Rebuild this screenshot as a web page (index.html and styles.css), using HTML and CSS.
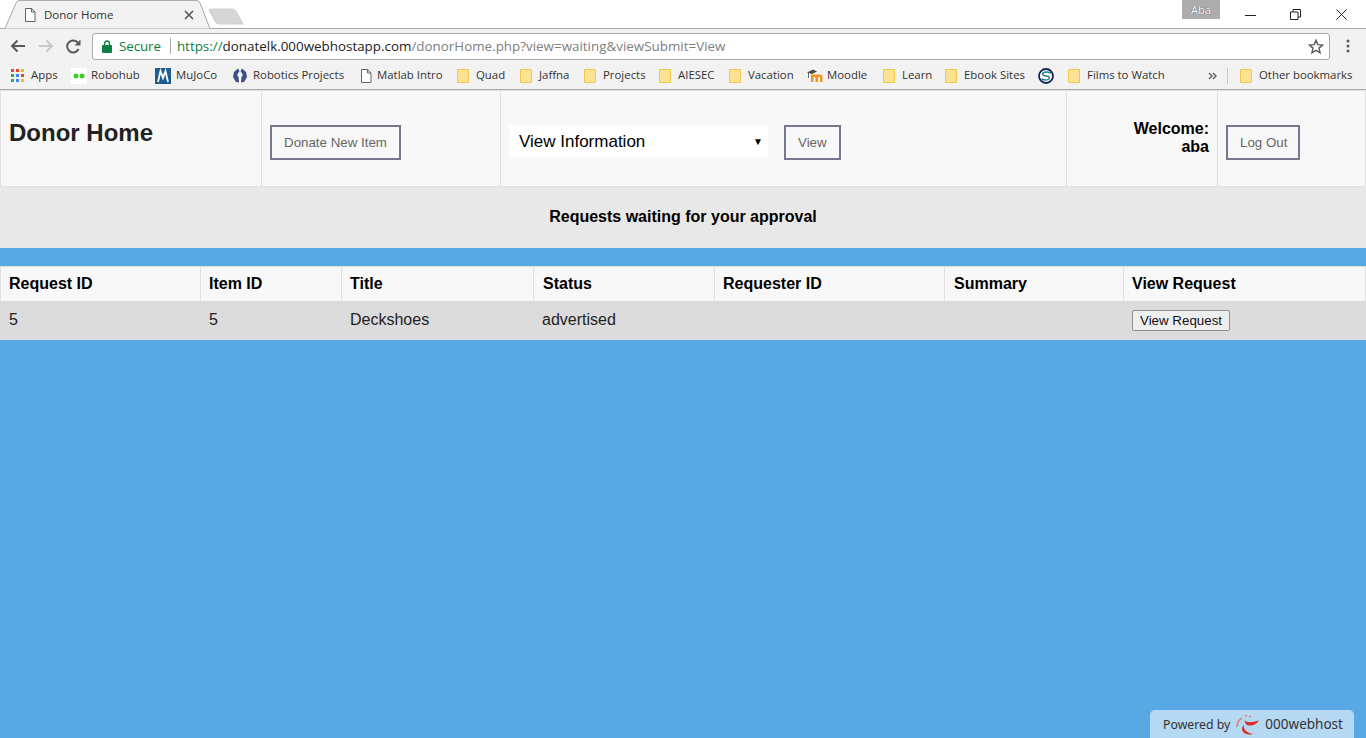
FILE: index.html
```html
<!DOCTYPE html>
<html lang="en">
<head>
  <meta charset="UTF-8">
  <title>Donor Home</title>
  <link rel="stylesheet" href="styles.css">
</head>
<body>
  <div class="tabstrip">
    <svg class="tab-shape" width="250" height="29" viewBox="0 0 250 29">
      <path d="M0 28.5H5L16 3Q17 .5 20 .5H196Q199 .5 200 3L210 28.5" fill="#f2f2f2" stroke="#a9a9a9"/>
      <path d="M210 9H232Q235 9 236 11L243 24H219Q216 24 215 21L209 10Q209 9 210 9Z" fill="#d6d6d6" stroke="#d0d0d0"/>
    </svg>
    <div class="tab">
      <svg width="12" height="14" viewBox="0 0 12 14"><path d="M1.5.5H7.5L11 4V13.5H1.5ZM7.5.5V4H11" fill="#fff" stroke="#5f6368"/></svg>
      <span class="tab-title">Donor Home</span>
      <svg class="tab-close" width="10" height="10" viewBox="0 0 10 10"><path d="M1 1L9 9M9 1L1 9" stroke="#555" stroke-width="1.6"/></svg>
    </div>
    <div class="win-controls">
      <span class="profile">Aba</span>
      <span class="win-btn"><svg width="11" height="11" viewBox="0 0 11 11"><path d="M0 6.5H11" stroke="#222"/></svg></span>
      <span class="win-btn"><svg width="11" height="11" viewBox="0 0 11 11"><path d="M.5 3H8V10.5H.5ZM3 3V.5H10.5V8H8" fill="none" stroke="#222"/></svg></span>
      <span class="win-btn"><svg width="11" height="11" viewBox="0 0 11 11"><path d="M.5 .5L10.5 10.5M10.5 .5L.5 10.5" stroke="#222"/></svg></span>
    </div>
  </div>

  <div class="toolbar">
    <svg class="nav" width="16" height="14" viewBox="0 0 16 14"><path d="M15 7H2M7.5 1.5L2 7L7.5 12.5" fill="none" stroke="#5a5a5a" stroke-width="2"/></svg>
    <svg class="nav" width="16" height="14" viewBox="0 0 16 14"><path d="M1 7H14M8.5 1.5L14 7L8.5 12.5" fill="none" stroke="#c8c8c8" stroke-width="2"/></svg>
    <svg class="nav" width="15" height="15" viewBox="0 0 15 15"><path d="M12.6 10A6 6 0 1 1 12 3.8" fill="none" stroke="#5a5a5a" stroke-width="2"/><path d="M14.5 .5V6.5H8.5Z" fill="#5a5a5a"/></svg>
    <div class="omnibox">
      <svg width="10" height="13" viewBox="0 0 10 13"><path d="M2.5 6V3.5A2.5 2.5 0 0 1 7.5 3.5V6" fill="none" stroke="#0b8043" stroke-width="1.4"/><rect y="5" width="10" height="8" rx="1" fill="#0b8043"/></svg>
      <span class="secure">Secure</span>
      <span class="omni-sep"></span>
      <span class="url"><span class="url-scheme">https://</span><span class="url-host">donatelk.000webhostapp.com</span>/donorHome.php?view=waiting&amp;viewSubmit=View</span>
      <svg class="star" width="16" height="15" viewBox="0 0 16 15"><path d="M8 1.2L9.8 5.6L14.6 6L11 9.1L12.1 13.8L8 11.3L3.9 13.8L5 9.1L1.4 6L6.2 5.6Z" fill="none" stroke="#5a5a5a" stroke-width="1.4"/></svg>
    </div>
    <svg class="menu" width="4" height="14" viewBox="0 0 4 14"><circle cx="2" cy="2" r="1.5" fill="#5a5a5a"/><circle cx="2" cy="7" r="1.5" fill="#5a5a5a"/><circle cx="2" cy="12" r="1.5" fill="#5a5a5a"/></svg>
  </div>

  <div class="bookmarks">
    <div class="bm">
      <svg width="13" height="13" viewBox="0 0 13 13">
        <rect width="3" height="3" fill="#ea4335"/><rect x="5" width="3" height="3" fill="#ea4335"/><rect x="10" width="3" height="3" fill="#fbbc05"/>
        <rect y="5" width="3" height="3" fill="#34a853"/><rect x="5" y="5" width="3" height="3" fill="#4285f4"/><rect x="10" y="5" width="3" height="3" fill="#ea4335"/>
        <rect y="10" width="3" height="3" fill="#34a853"/><rect x="5" y="10" width="3" height="3" fill="#4285f4"/><rect x="10" y="10" width="3" height="3" fill="#fbbc05"/>
      </svg>
      <span>Apps</span>
    </div>
    <div class="bm bm-tight">
      <svg width="16" height="16" viewBox="0 0 16 16"><rect width="16" height="16" fill="#fff"/><circle cx="5" cy="8" r="2.5" fill="#3fce29"/><circle cx="11" cy="8" r="2.5" fill="#3fce29"/></svg>
      <span>Robohub</span>
    </div>
    <div class="bm bm-doc">
      <svg width="16" height="16" viewBox="0 0 16 16"><rect width="16" height="16" fill="#1b5e8f"/><path d="M3 14L5.5 3L8 10L10.5 3L13 14" fill="none" stroke="#fff" stroke-width="1.8"/></svg>
      <span>MuJoCo</span>
    </div>
    <div class="bm bm-six">
      <svg width="14" height="15" viewBox="0 0 14 15"><path d="M5 .5L1 4L0 9L3 14L6 14.5L5.5 9L4 7L6.5 3ZM9 .5L13 4L14 9L11 14L8 14.5L8.5 9L10 7L7.5 3Z" fill="#3f4f86"/></svg>
      <span>Robotics Projects</span>
    </div>
    <div class="bm bm-doc">
      <svg width="12" height="14" viewBox="0 0 12 14"><path d="M1.5 .5H7.5L11 4V13.5H1.5ZM7.5 .5V4H11" fill="#fff" stroke="#5f6368"/></svg>
      <span>Matlab Intro</span>
    </div>
    <div class="bm"><svg class="folder" width="12" height="14" viewBox="0 0 12 14"><use href="#folder"/></svg><span>Quad</span></div>
    <div class="bm"><svg class="folder" width="12" height="14" viewBox="0 0 12 14"><use href="#folder"/></svg><span>Jaffna</span></div>
    <div class="bm"><svg class="folder" width="12" height="14" viewBox="0 0 12 14"><use href="#folder"/></svg><span>Projects</span></div>
    <div class="bm"><svg class="folder" width="12" height="14" viewBox="0 0 12 14"><use href="#folder"/></svg><span>AIESEC</span></div>
    <div class="bm"><svg class="folder" width="12" height="14" viewBox="0 0 12 14"><use href="#folder"/></svg><span>Vacation</span></div>
    <div class="bm bm-tight">
      <svg width="16" height="14" viewBox="0 0 16 14"><path d="M4 5.5H13Q15.5 5.5 15.5 8V13H13V8H11V13H8.5V8H6.5V13H4Z" fill="#f0961e"/><path d="M0 3.5L6 .5L10 2.5L5 5Z" fill="#4a4a4a"/><path d="M1.5 4V9" stroke="#666"/></svg>
      <span>Moodle</span>
    </div>
    <div class="bm"><svg class="folder" width="12" height="14" viewBox="0 0 12 14"><use href="#folder"/></svg><span>Learn</span></div>
    <div class="bm"><svg class="folder" width="12" height="14" viewBox="0 0 12 14"><use href="#folder"/></svg><span>Ebook Sites</span></div>
    <div class="bm">
      <svg width="16" height="16" viewBox="0 0 16 16"><circle cx="8" cy="8" r="7" fill="#fff" stroke="#14235e" stroke-width="1.8"/><path d="M13 5Q8 3 5 5Q3.5 7.5 8 8Q12.5 8.5 11 11Q8 13 3.5 11" fill="none" stroke="#1c7f7a" stroke-width="1.5"/></svg>
    </div>
    <div class="bm"><svg class="folder" width="12" height="14" viewBox="0 0 12 14"><use href="#folder"/></svg><span>Films to Watch</span></div>
    <div class="bm-end">
      <svg width="9" height="8" viewBox="0 0 9 8"><path d="M1 1L4 4L1 7M5 1L8 4L5 7" fill="none" stroke="#666" stroke-width="1.5"/></svg>
      <span class="bm-sep"></span>
      <div class="bm"><svg class="folder" width="12" height="14" viewBox="0 0 12 14"><use href="#folder"/></svg><span>Other bookmarks</span></div>
    </div>
    <svg class="defs" width="0" height="0"><symbol id="folder" viewBox="0 0 12 14"><path d="M.5 .5H11.5V13.5H.5Z" fill="#fde293" stroke="#f0c94f"/></symbol></svg>
  </div>

  <table class="panel">
    <tr>
      <td class="brand"><h1>Donor Home</h1></td>
      <td class="donate"><button class="btn">Donate New Item</button></td>
      <td class="picker">
        <div class="picker-row">
          <div class="select"><span>View Information</span><span class="caret">&#9660;</span></div>
          <button class="btn">View</button>
        </div>
      </td>
      <td class="welcome">Welcome:<br>aba</td>
      <td class="logout"><button class="btn">Log Out</button></td>
    </tr>
  </table>

  <div class="notice">Requests waiting for your approval</div>

  <table class="requests">
    <thead>
      <tr>
        <th class="c-req">Request ID</th>
        <th class="c-item">Item ID</th>
        <th class="c-title">Title</th>
        <th class="c-status">Status</th>
        <th class="c-requester">Requester ID</th>
        <th class="c-summary">Summary</th>
        <th>View Request</th>
      </tr>
    </thead>
    <tbody>
      <tr>
        <td>5</td>
        <td>5</td>
        <td>Deckshoes</td>
        <td>advertised</td>
        <td></td>
        <td></td>
        <td><button class="btn-plain">View Request</button></td>
      </tr>
    </tbody>
  </table>

  <div class="powered">
    <span>Powered by</span>
    <svg width="24" height="21" viewBox="0 0 24 21">
      <path d="M1 13Q1 7 6 4" fill="none" stroke="#e8807a" stroke-width="1.6"/>
      <path d="M9 2L11 1.5M13 2L15 3" stroke="#e8807a" stroke-width="1.4"/>
      <path d="M8.5 6Q11 10 23 6.5Q19 12 13 11.5Q9 11 8.5 6Z" fill="#e0281f"/>
      <path d="M7.5 11Q8 19 17 20Q11 21.5 7.5 18.5Q4.5 15 7.5 11Z" fill="#e0281f"/>
    </svg>
    <span class="powered-name">000webhost</span>
  </div>
</body>
</html>
```

FILE: styles.css
```css
html, body {
  margin: 0;
  height: 738px;
  overflow: hidden;
}
body {
  position: relative;
  background: #58a9e3;
  font-family: "Liberation Sans", Arial, sans-serif;
  color: #000;
}

/* browser chrome */
.tabstrip {
  position: relative;
  height: 28px;
  background: #fff;
  border-bottom: 1px solid #a9a9a9;
  display: flex;
  justify-content: space-between;
}
.tab-shape {
  position: absolute;
  left: 0;
  top: 0;
}
.tab {
  position: relative;
  display: flex;
  align-items: center;
  width: 170px;
  padding: 1px 0 0 24px;
  gap: 8px;
  font: 11.5px "Open Sans", sans-serif;
  color: #333;
}
.tab-title {
  flex: 1;
}
.win-controls {
  display: flex;
  align-items: flex-start;
  padding-right: 2px;
}
.profile {
  width: 38px;
  height: 19px;
  background: #adadad;
  color: #fff;
  font: 11px/19px "Open Sans", sans-serif;
  text-align: center;
  text-shadow: 0 0 1px #333;
  margin-right: 7.5px;
}
.win-btn {
  width: 45.5px;
  height: 28px;
  display: flex;
  align-items: center;
  justify-content: center;
}
.toolbar {
  height: 32px;
  padding: 1px 0 0 10px;
  background: #f2f2f2;
  display: flex;
  align-items: center;
}
.nav {
  margin-right: 6px;
}
.nav + .nav {
  margin-left: 6px;
}
.omnibox {
  width: 1227px;
  height: 25px;
  margin-left: 5px;
  background: #fff;
  border: 1px solid #a9a9a9;
  border-radius: 3px;
  display: flex;
  align-items: center;
  padding-left: 9px;
  box-sizing: content-box;
  font: 13.4px "Open Sans", sans-serif;
  color: #808080;
}
.secure {
  margin-left: 7px;
  color: #0b8043;
  letter-spacing: -0.1px;
}
.omni-sep {
  width: 1px;
  height: 16px;
  background: #a9a9a9;
  margin: 0 6px 0 9px;
}
.url {
  flex: 1;
}
.url-scheme {
  color: #0b8043;
}
.url-host {
  color: #222;
}
.star {
  margin-right: 5px;
}
.menu {
  margin-left: 16px;
}
.bookmarks {
  height: 27px;
  background: #f2f2f2;
  border-bottom: 1px solid #a9a9a9;
  display: grid;
  grid-template-columns: 60px 84px 78px 127px 97px 63px 64px 75px 70px 78px 76px 62px 93px 30px 140px 1fr;
  align-items: center;
  padding-left: 11px;
  font: 11.4px "Open Sans", sans-serif;
  color: #333;
}
.bm {
  display: flex;
  align-items: center;
  gap: 7px;
  white-space: nowrap;
}
.bm span {
  margin-bottom: 2px;
}
.bm-tight {
  gap: 4px;
}
.bm-doc {
  gap: 5px;
}
.bm-six {
  gap: 6px;
}
.bm-end {
  display: flex;
  align-items: center;
  justify-content: flex-end;
  padding-right: 14px;
}
.bm-sep {
  width: 1px;
  height: 16px;
  background: #c8c8c8;
  margin: 0 12px 0 10px;
}
.defs {
  position: absolute;
}

/* page */
table {
  width: 100%;
  border-collapse: collapse;
  table-layout: fixed;
}
.panel {
  height: 97px;
  background: #f8f8f8;
}
.panel td {
  border: 1px solid #e0e0e0;
  padding: 0 8px;
}
.brand {
  width: 244px;
  vertical-align: top;
}
h1 {
  font-size: 24px;
  color: #222;
  margin: 28px 0 0;
  line-height: 28px;
}
.donate {
  width: 222px;
}
.btn {
  background: #f8f8f8;
  border: 2px solid #77778f;
  color: #666;
  font: 13.33px "Liberation Sans", Arial, sans-serif;
  padding: 0 12px 1px;
  height: 35px;
  margin-top: 8px;
}
.logout .btn {
  padding-right: 11px;
}
.picker-row {
  display: flex;
  align-items: flex-start;
  gap: 16px;
}
.select {
  width: 259px;
  height: 33px;
  margin-top: 8px;
  background: #fff;
  display: flex;
  justify-content: space-between;
  align-items: center;
  padding: 0 5px 0 10px;
  box-sizing: border-box;
  font-size: 17px;
}
.caret {
  font-size: 10px;
}
.welcome {
  width: 134px;
  text-align: right;
  font-weight: bold;
  font-size: 16px;
  line-height: 18px;
}
.panel .welcome {
  padding-bottom: 2px;
}
.logout {
  width: 131px;
}
.notice {
  height: 61px;
  line-height: 59px;
  background: #e8e8e8;
  text-align: center;
  font-weight: bold;
  font-size: 16px;
}
.requests {
  margin-top: 18px;
  font-size: 16px;
  border-top: 1px solid #e0e0e0;
}
.requests th {
  height: 34px;
  background: #f8f8f8;
  border-left: 1px solid #e0e0e0;
  border-right: 1px solid #e0e0e0;
  text-align: left;
  padding: 0 8px;
  box-sizing: border-box;
}
.requests td {
  height: 39px;
  background: #dcdcdc;
  border-left: 1px solid #dcdcdc;
  border-right: 1px solid #dcdcdc;
  color: #222;
  padding: 0 8px;
  box-sizing: border-box;
}
.c-req { width: 200px; }
.c-item { width: 141px; }
.c-title { width: 192px; }
.c-status { width: 181px; }
.c-requester { width: 230px; }
.c-summary { width: 179px; }
.requests .c-status,
.requests .c-summary {
  padding-left: 9px;
}
.btn-plain {
  font: 13.33px "Liberation Sans", Arial, sans-serif;
  color: #111;
  background: #efefef;
  border: 1px solid #8f8f8f;
  border-radius: 2px;
  height: 21px;
  width: 98px;
  padding: 0;
}
.powered {
  position: absolute;
  right: 12px;
  bottom: 0;
  height: 28px;
  width: 204px;
  box-sizing: border-box;
  background: #b5d8f3;
  border-radius: 5px 5px 0 0;
  display: flex;
  align-items: center;
  padding-left: 13px;
  gap: 6px;
  font: 12.3px "Noto Sans", sans-serif;
  color: #333;
}
.powered-name {
  font-size: 13.5px;
  margin-left: -1px;
}
```
